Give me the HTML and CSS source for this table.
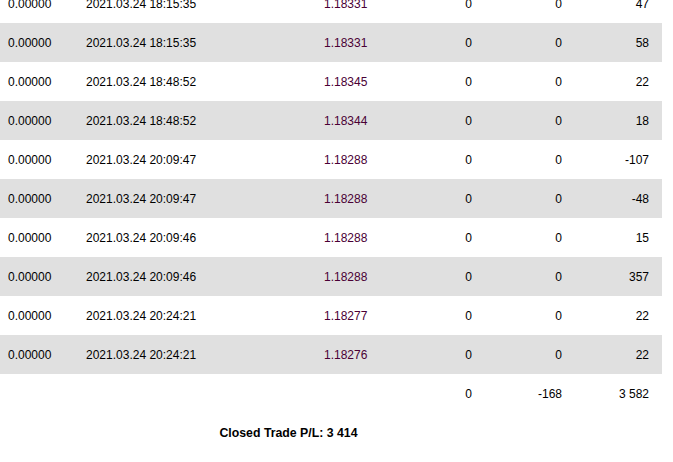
FILE: index.html
```html
<!DOCTYPE html>
<html lang="en">
<head>
  <meta charset="UTF-8" />
  <meta name="viewport" content="width=device-width, initial-scale=1.0"/>
  <title>Report</title>
  <link rel="stylesheet" href="styles.css">
</head>
<body>

  <div class="report">
    <table class="deals">
      <colgroup>
        <col class="c-price-sl">
        <col class="c-time">
        <col class="c-price">
        <col class="c-comm">
        <col class="c-swap">
        <col class="c-profit">
      </colgroup>
      <tbody>
        <tr><td>0.00000</td><td>2021.03.24 18:15:35</td><td class="price">1.18331</td><td class="num">0</td><td class="num">0</td><td class="num">47</td></tr>
        <tr class="alt"><td>0.00000</td><td>2021.03.24 18:15:35</td><td class="price">1.18331</td><td class="num">0</td><td class="num">0</td><td class="num">58</td></tr>
        <tr><td>0.00000</td><td>2021.03.24 18:48:52</td><td class="price">1.18345</td><td class="num">0</td><td class="num">0</td><td class="num">22</td></tr>
        <tr class="alt"><td>0.00000</td><td>2021.03.24 18:48:52</td><td class="price">1.18344</td><td class="num">0</td><td class="num">0</td><td class="num">18</td></tr>
        <tr><td>0.00000</td><td>2021.03.24 20:09:47</td><td class="price">1.18288</td><td class="num">0</td><td class="num">0</td><td class="num">-107</td></tr>
        <tr class="alt"><td>0.00000</td><td>2021.03.24 20:09:47</td><td class="price">1.18288</td><td class="num">0</td><td class="num">0</td><td class="num">-48</td></tr>
        <tr><td>0.00000</td><td>2021.03.24 20:09:46</td><td class="price">1.18288</td><td class="num">0</td><td class="num">0</td><td class="num">15</td></tr>
        <tr class="alt"><td>0.00000</td><td>2021.03.24 20:09:46</td><td class="price">1.18288</td><td class="num">0</td><td class="num">0</td><td class="num">357</td></tr>
        <tr><td>0.00000</td><td>2021.03.24 20:24:21</td><td class="price">1.18277</td><td class="num">0</td><td class="num">0</td><td class="num">22</td></tr>
        <tr class="alt"><td>0.00000</td><td>2021.03.24 20:24:21</td><td class="price">1.18276</td><td class="num">0</td><td class="num">0</td><td class="num">22</td></tr>
      </tbody>
      <tfoot>
        <tr><td colspan="3"></td><td class="num">0</td><td class="num">-168</td><td class="num">3 582</td></tr>
        <tr class="summary"><td colspan="5">Closed Trade P/L: 3 414</td><td></td></tr>
      </tfoot>
    </table>
  </div>

</body>
</html>
```

FILE: styles.css
```css
* { margin: 0; padding: 0; box-sizing: border-box; }
body {
  font-family: 'Liberation Sans', Arial, sans-serif;
  font-size: 12px;
  color: #000;
  background: #fff;
  overflow: hidden;
}
.report {
  margin-top: -16px;
}
.deals {
  width: 662px;
  border-collapse: collapse;
  table-layout: fixed;
}
.c-price-sl { width: 78px; }
.c-time { width: 238px; }
.c-price { width: 100px; }
.c-comm { width: 69px; }
.c-swap { width: 90px; }
.c-profit { width: 87px; }
.deals td {
  height: 39px;
  padding: 0 8px;
  vertical-align: middle;
  white-space: nowrap;
}
.deals tr.alt td { background: #e0e0e0; }
.deals td.num {
  text-align: right;
  padding-right: 13px;
}
.deals td.price { color: #4a0035; }
.deals tr.summary td {
  height: 40px;
  text-align: center;
  font-weight: bold;
  font-size: 12.3px;
  padding-left: 10px;
}
```
